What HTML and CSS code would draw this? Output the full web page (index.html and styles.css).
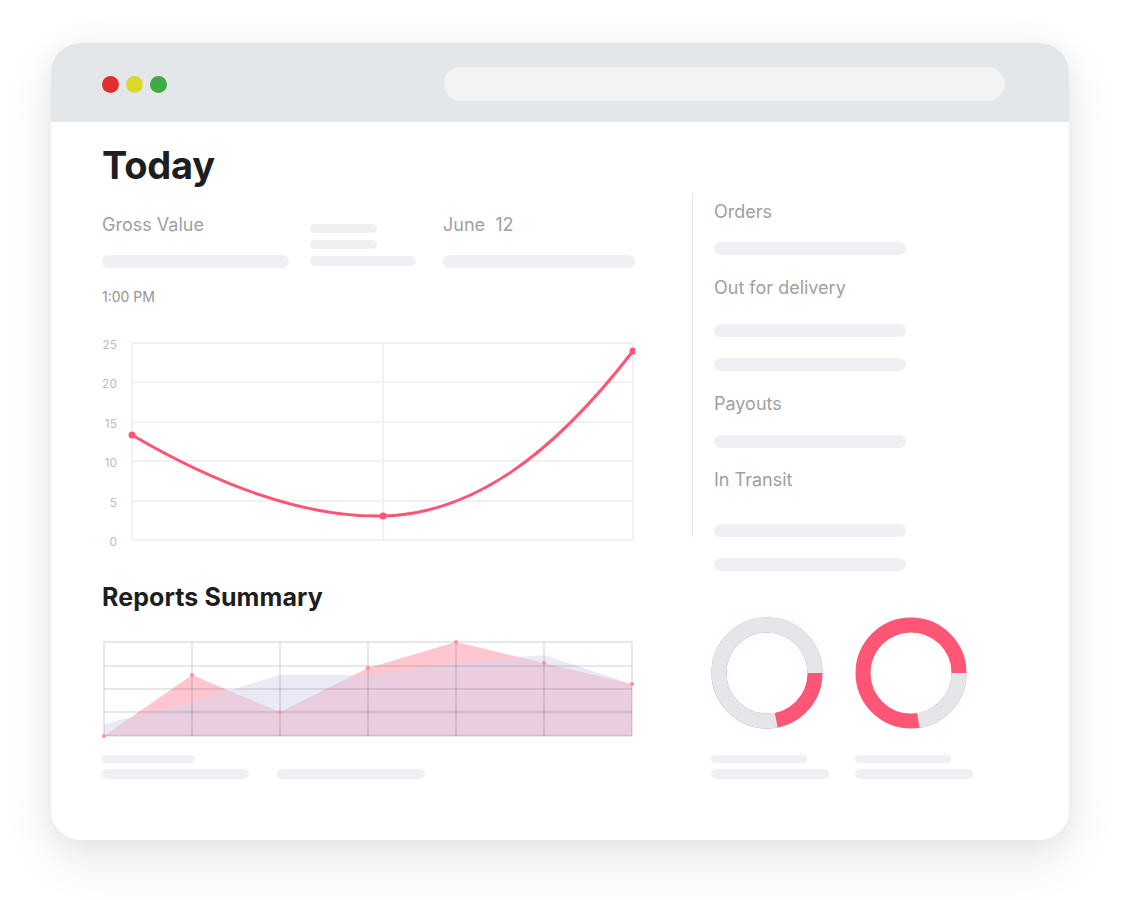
FILE: index.html
```html
<!DOCTYPE html>
<html lang="en">

<head>
    <meta charset="UTF-8">
    <meta name="viewport" content="width=device-width, initial-scale=1.0">
    <title>Today</title>
    <link rel="stylesheet" href="styles.css">
</head>

<body>
    <div class="window">
        <div class="titlebar">
            <span class="dot dot-red"></span>
            <span class="dot dot-yellow"></span>
            <span class="dot dot-green"></span>
            <div class="address"></div>
        </div>

        <div class="content">
            <div class="main">
                <h1 class="title">Today</h1>

                <div class="stats">
                    <div class="stat stat-gross">
                        <div class="label">Gross Value</div>
                        <div class="bar bar-lg"></div>
                    </div>
                    <div class="stat stat-mid">
                        <div class="bar bar-sm w-67"></div>
                        <div class="bar bar-sm w-67"></div>
                        <div class="bar bar-md w-106"></div>
                    </div>
                    <div class="stat stat-date">
                        <div class="label">June&nbsp; 12</div>
                        <div class="bar bar-lg"></div>
                    </div>
                </div>

                <div class="time">1:00 PM</div>

                <svg class="line-chart" width="533" height="212" viewBox="0 0 533 212">
                    <g class="grid">
                        <line x1="30" y1="7" x2="531" y2="7" />
                        <line x1="30" y1="46" x2="531" y2="46" />
                        <line x1="30" y1="86" x2="531" y2="86" />
                        <line x1="30" y1="125" x2="531" y2="125" />
                        <line x1="30" y1="165" x2="531" y2="165" />
                        <line x1="30" y1="204" x2="531" y2="204" />
                        <line x1="30" y1="7" x2="30" y2="204" />
                        <line x1="281" y1="7" x2="281" y2="204" />
                        <line x1="531" y1="7" x2="531" y2="204" />
                    </g>
                    <g class="axis">
                        <text x="15" y="10">25</text>
                        <text x="15" y="49">20</text>
                        <text x="15" y="89">15</text>
                        <text x="15" y="128">10</text>
                        <text x="15" y="168">5</text>
                        <text x="15" y="207">0</text>
                    </g>
                    <path class="curve" d="M30 99 C 110 146, 200 182, 281 180 C 370 178, 450 120, 531 15" />
                    <circle class="point" cx="30" cy="99" r="3.5" />
                    <circle class="point" cx="281" cy="180" r="3.5" />
                    <circle class="point" cx="531" cy="15" r="3.5" />
                </svg>

                <h2 class="subtitle">Reports Summary</h2>

                <svg class="area-chart" width="533" height="98" viewBox="0 0 533 98">
                    <polygon class="area-pink" points="2,96 90,35 178,72 266,28 354,2 442,23 530,44 530,96" />
                    <polygon class="area-lilac" points="2,84 90,62 178,35 266,35 354,23 442,15 530,44 530,96 2,96" />
                    <g class="table">
                        <rect x="2" y="2" width="528" height="94" />
                        <line x1="2" y1="26" x2="530" y2="26" />
                        <line x1="2" y1="49" x2="530" y2="49" />
                        <line x1="2" y1="72" x2="530" y2="72" />
                        <line x1="90" y1="2" x2="90" y2="96" />
                        <line x1="178" y1="2" x2="178" y2="96" />
                        <line x1="266" y1="2" x2="266" y2="96" />
                        <line x1="354" y1="2" x2="354" y2="96" />
                        <line x1="442" y1="2" x2="442" y2="96" />
                    </g>
                    <g class="vertex">
                        <circle cx="2" cy="96" r="2" />
                        <circle cx="90" cy="35" r="2" />
                        <circle cx="178" cy="72" r="2" />
                        <circle cx="266" cy="28" r="2" />
                        <circle cx="354" cy="2" r="2" />
                        <circle cx="442" cy="23" r="2" />
                        <circle cx="530" cy="44" r="2" />
                    </g>
                </svg>

                <div class="legend">
                    <div class="bar bar-thin w-93"></div>
                    <div class="legend-row">
                        <div class="bar bar-sm w-147"></div>
                        <div class="bar bar-sm w-148"></div>
                    </div>
                </div>
            </div>

            <div class="side">
                <div class="side-top">
                    <div class="divider"></div>
                    <div class="side-list">
                        <div class="label">Orders</div>
                        <div class="bar bar-lg w-192 mt-20"></div>

                        <div class="label mt-23">Out for delivery</div>
                        <div class="bar bar-lg w-192 mt-26"></div>
                        <div class="bar bar-lg w-192 mt-21"></div>

                        <div class="label mt-23">Payouts</div>
                        <div class="bar bar-lg w-192 mt-21"></div>

                        <div class="label mt-22">In Transit</div>
                        <div class="bar bar-lg w-192 mt-34"></div>
                        <div class="bar bar-lg w-192 mt-21"></div>
                    </div>
                </div>

                <div class="donuts">
                    <div class="donut-card">
                        <svg class="donut" width="112" height="112" viewBox="0 0 112 112">
                            <circle class="ring-red" cx="56" cy="56" r="48" />
                            <circle class="ring-grey" cx="56" cy="56" r="48" stroke-dasharray="236 302" stroke-dashoffset="-66" />
                        </svg>
                        <div class="bar bar-thin w-96"></div>
                        <div class="bar bar-sm w-118"></div>
                    </div>
                    <div class="donut-card">
                        <svg class="donut" width="112" height="112" viewBox="0 0 112 112">
                            <circle class="ring-red" cx="56" cy="56" r="48" />
                            <circle class="ring-grey" cx="56" cy="56" r="48" stroke-dasharray="68 302" />
                        </svg>
                        <div class="bar bar-thin w-96"></div>
                        <div class="bar bar-sm w-118"></div>
                    </div>
                </div>
            </div>
        </div>
    </div>
</body>

</html>
```

FILE: styles.css
```css
body {
    margin: 0;
    padding: 43px 0 60px 51px;
    background-color: #ffffff;
    font-family: Inter, "Noto Sans", sans-serif;
}

.window {
    width: 1018px;
    height: 797px;
    border-radius: 30px;
    background-color: #ffffff;
    box-shadow: 0 18px 50px rgba(0, 0, 0, 0.1), 0 0 24px rgba(0, 0, 0, 0.04);
    overflow: hidden;
}

.titlebar {
    display: flex;
    align-items: center;
    height: 79px;
    padding: 3px 64px 0 51px;
    box-sizing: border-box;
    background-color: #e4e7ea;
}

.dot {
    width: 17px;
    height: 17px;
    margin-right: 7px;
    border-radius: 50%;
}

.dot-red {
    background: #e22e2e;
}

.dot-yellow {
    background: #dcd82b;
}

.dot-green {
    background: #3daa43;
}

.address {
    margin-left: auto;
    width: 561px;
    height: 34px;
    border-radius: 17px;
    background-color: #f2f3f5;
}

.content {
    display: flex;
    padding: 20px 0 0 51px;
}

.main {
    width: 533px;
}

.title {
    margin: 0;
    font-size: 38px;
    line-height: 46px;
    font-weight: 700;
    color: #1e1e1e;
    letter-spacing: -0.2px;
}

.label {
    font-size: 18px;
    line-height: 20px;
    color: #a0a0a0;
}

.bar {
    border-radius: 7px;
    background-color: #eef0f4;
}

.bar-lg {
    height: 13px;
}

.bar-md {
    height: 10px;
}

.bar-sm {
    height: 10px;
}

.bar-thin {
    height: 8px;
}

.w-67 { width: 67px; }
.w-93 { width: 93px; }
.w-96 { width: 96px; }
.w-106 { width: 106px; }
.w-118 { width: 118px; }
.w-147 { width: 147px; }
.w-148 { width: 148px; }
.w-192 { width: 192px; }

.mt-20 { margin-top: 20px; }
.mt-21 { margin-top: 21px; }
.mt-22 { margin-top: 22px; }
.mt-23 { margin-top: 23px; }
.mt-26 { margin-top: 26px; }
.mt-34 { margin-top: 34px; }

/* stats row */
.stats {
    display: flex;
    margin-top: 27px;
}

.stat-gross {
    width: 187px;
}

.stat-gross .bar,
.stat-date .bar {
    margin-top: 20px;
}

.stat-mid {
    display: flex;
    flex-direction: column;
    gap: 7px;
    width: 106px;
    margin-left: 21px;
    padding-top: 9px;
}

.stat-mid .bar-sm {
    height: 9px;
}

.stat-date {
    width: 192px;
    margin-left: 27px;
}

.time {
    margin-top: 21px;
    font-size: 14px;
    line-height: 16px;
    color: #959595;
}

/* line chart */
.line-chart {
    display: block;
    margin-top: 31px;
}

.grid line {
    stroke: #f1f1f3;
    stroke-width: 2;
}

.axis text {
    font-size: 12px;
    fill: #bdbdbd;
    text-anchor: end;
    dominant-baseline: middle;
}

.curve {
    fill: none;
    stroke: #ff5473;
    stroke-width: 3;
    stroke-linecap: round;
}

.point {
    fill: #ff5473;
}

.subtitle {
    margin: 34px 0 0;
    font-size: 25px;
    line-height: 30px;
    font-weight: 700;
    color: #1e1e1e;
    letter-spacing: 0.1px;
}

/* area chart */
.area-chart {
    display: block;
    margin-top: 28px;
}

.area-pink {
    fill: #ffc6d0;
}

.area-lilac {
    fill: rgba(214, 214, 240, 0.5);
}

.table rect,
.table line {
    fill: none;
    stroke: rgba(0, 0, 0, 0.12);
    stroke-width: 1.5;
}

.vertex circle {
    fill: #ff8ea2;
}

.legend {
    margin-top: 17px;
}

.legend-row {
    display: flex;
    gap: 28px;
    margin-top: 6px;
}

/* right side */
.side {
    margin-left: 57px;
}

.side-top {
    display: flex;
    align-items: flex-start;
    margin-top: 51px;
}

.divider {
    width: 1px;
    height: 344px;
    background-color: #e3e3e3;
}

.side-list {
    margin-left: 21px;
    padding-top: 9px;
}

.donuts {
    display: flex;
    margin: 46px 0 0 19px;
}

.donut-card {
    width: 144px;
}

.donut {
    display: block;
    margin-bottom: 26px;
}

.donut-card .bar-sm {
    margin-top: 6px;
}

.ring-red,
.ring-grey {
    fill: none;
    stroke-width: 15;
}

.ring-red {
    stroke: #ff5676;
}

.ring-grey {
    stroke: #e4e6e9;
}
```
